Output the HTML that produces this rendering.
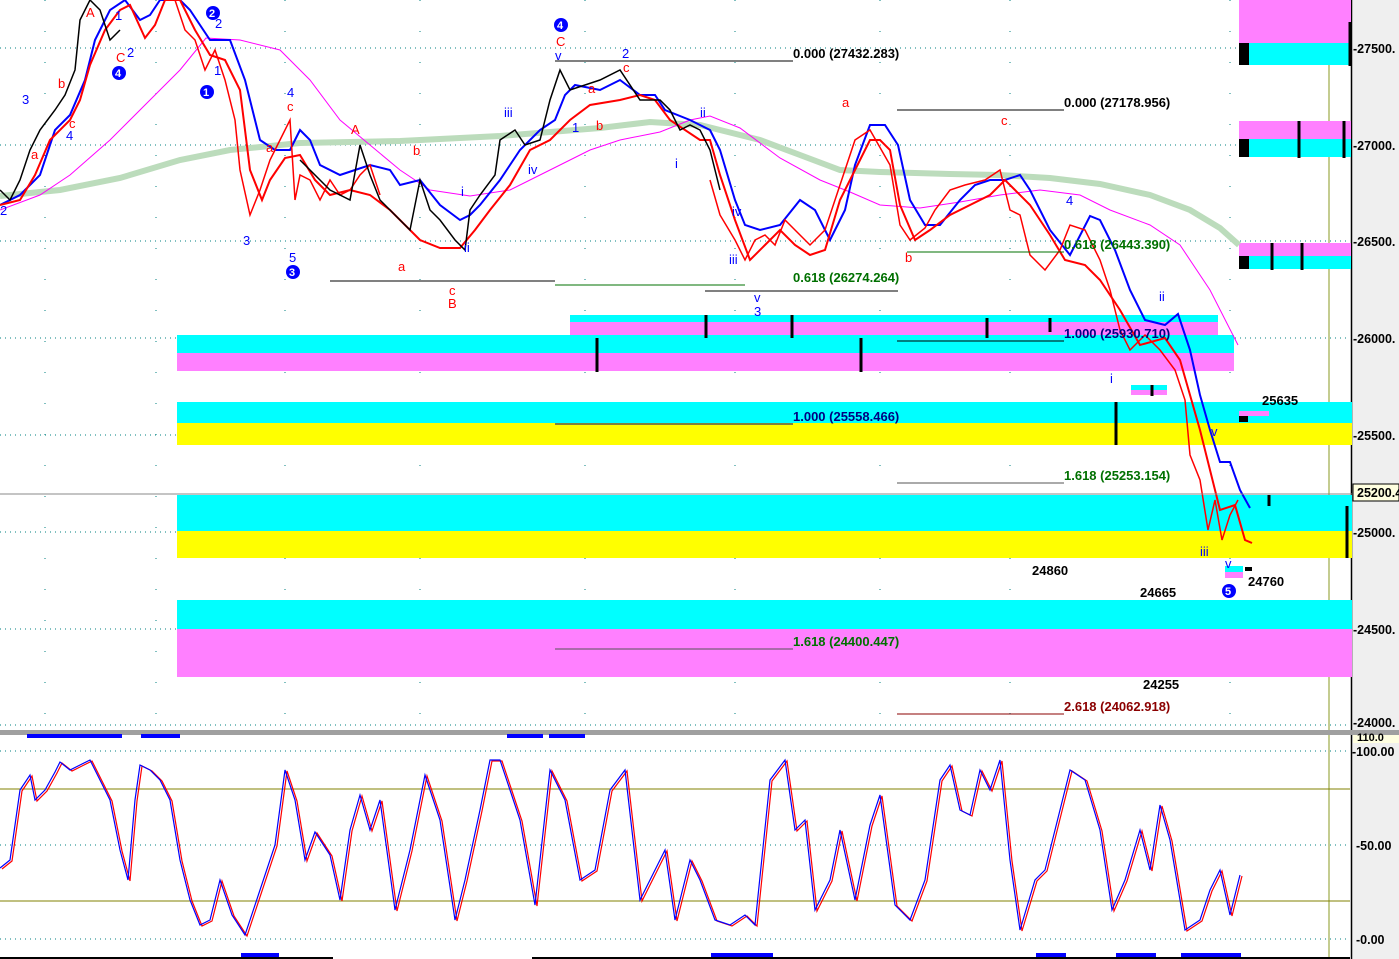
<!DOCTYPE html>
<html><head><meta charset="utf-8"><style>
html,body{margin:0;padding:0;background:#fff;}
svg{display:block;font-family:"Liberation Sans",sans-serif;font-weight:bold;}
</style></head><body>
<svg width="1399" height="959" viewBox="0 0 1399 959" xmlns="http://www.w3.org/2000/svg">
<rect width="1399" height="959" fill="#fff"/>
<rect x="1352" y="0" width="47" height="959" fill="#efefef"/>
<line x1="1351.5" y1="0" x2="1351.5" y2="959" stroke="#000" stroke-width="1.5"/>
<line x1="1329" y1="0" x2="1329" y2="959" stroke="#8a9a20" stroke-width="1"/>

<g stroke="#008080" stroke-width="1" stroke-dasharray="1,4">
<line x1="0" y1="48" x2="1350" y2="48"/><line x1="0" y1="145" x2="1350" y2="145"/>
<line x1="0" y1="241" x2="1350" y2="241"/><line x1="0" y1="338" x2="1350" y2="338"/>
<line x1="0" y1="435" x2="1350" y2="435"/><line x1="0" y1="532" x2="1350" y2="532"/>
<line x1="0" y1="629" x2="1350" y2="629"/><line x1="0" y1="725" x2="1350" y2="725"/>
<line x1="0" y1="751" x2="1350" y2="751"/><line x1="0" y1="845" x2="1350" y2="845"/><line x1="0" y1="939" x2="1350" y2="939"/>
</g>
<g stroke="#008080" stroke-width="1" stroke-dasharray="1,30">
<line x1="45" y1="0" x2="45" y2="730"/><line x1="156" y1="0" x2="156" y2="730"/><line x1="285" y1="0" x2="285" y2="730"/>
<line x1="420" y1="0" x2="420" y2="730"/><line x1="585" y1="0" x2="585" y2="730"/><line x1="735" y1="0" x2="735" y2="730"/>
<line x1="880" y1="0" x2="880" y2="730"/><line x1="1010" y1="0" x2="1010" y2="730"/><line x1="1230" y1="0" x2="1230" y2="730"/>
</g>

<rect x="570" y="315" width="648" height="7" fill="#00ffff"/>
<rect x="570" y="322" width="648" height="14" fill="#ff80ff"/>
<rect x="177" y="335" width="1057" height="18" fill="#00ffff"/>
<rect x="177" y="353" width="1057" height="18" fill="#ff80ff"/>
<rect x="1131" y="385" width="36" height="5" fill="#00ffff"/><rect x="1131" y="390" width="36" height="5" fill="#ff80ff"/>
<rect x="177" y="402" width="1175" height="21" fill="#00ffff"/>
<rect x="177" y="423" width="1175" height="22" fill="#ffff00"/>
<rect x="177" y="495" width="1175" height="36" fill="#00ffff"/>
<rect x="177" y="531" width="1175" height="27" fill="#ffff00"/>
<rect x="177" y="600" width="1175" height="29" fill="#00ffff"/>
<rect x="177" y="629" width="1175" height="48" fill="#ff80ff"/>
<rect x="1239" y="411" width="30" height="5" fill="#ff80ff"/><rect x="1239" y="416" width="9" height="6" fill="#000"/>
<rect x="1225" y="566" width="18" height="6" fill="#00ffff"/><rect x="1225" y="572" width="18" height="6" fill="#ff80ff"/>
<rect x="1245" y="567" width="7" height="4" fill="#000"/>
<rect x="1239" y="0" width="112" height="43" fill="#ff80ff"/><rect x="1239" y="43" width="112" height="22" fill="#00ffff"/><rect x="1239" y="43" width="10" height="22" fill="#000"/>
<rect x="1239" y="121" width="112" height="18" fill="#ff80ff"/><rect x="1239" y="139" width="112" height="18" fill="#00ffff"/><rect x="1239" y="139" width="10" height="18" fill="#000"/>
<rect x="1239" y="243" width="112" height="13" fill="#ff80ff"/><rect x="1239" y="256" width="112" height="13" fill="#00ffff"/><rect x="1239" y="256" width="10" height="13" fill="#000"/>
<g stroke="#000" stroke-width="3">
<line x1="1299" y1="121" x2="1299" y2="158"/><line x1="1344" y1="121" x2="1344" y2="158"/>
<line x1="1272" y1="243" x2="1272" y2="270"/><line x1="1302" y1="243" x2="1302" y2="270"/>
<line x1="1350" y1="22" x2="1350" y2="66"/>
<line x1="597" y1="338" x2="597" y2="372"/><line x1="706" y1="315" x2="706" y2="338"/><line x1="792" y1="315" x2="792" y2="338"/>
<line x1="861" y1="338" x2="861" y2="372"/><line x1="987" y1="318" x2="987" y2="338"/><line x1="1050" y1="318" x2="1050" y2="332"/>
<line x1="1116" y1="402" x2="1116" y2="445"/><line x1="1152" y1="385" x2="1152" y2="396"/>
<line x1="1269" y1="495" x2="1269" y2="506"/><line x1="1347" y1="506" x2="1347" y2="558"/>
</g>

<polyline fill="none" stroke="#bcdcbc" stroke-width="6" points="0,196 60,190 120,178 180,160 230,150 300,143 400,141 500,136 600,128 650,122 700,125 760,140 800,155 840,170 880,172 950,174 1000,175 1050,178 1100,184 1150,195 1190,210 1220,228 1239,245"/>
<polyline fill="none" stroke="#ff00ff" stroke-width="1" points="0,210 40,195 70,175 110,140 150,100 180,70 206,38 240,40 280,50 310,80 340,120 370,145 400,170 430,190 470,196 510,190 550,170 590,150 620,140 660,132 690,120 710,116 740,128 780,158 820,180 850,192 880,205 920,208 960,202 1000,195 1040,190 1080,195 1110,210 1150,225 1180,245 1210,290 1238,345"/>
<polyline fill="none" stroke="#0000ff" stroke-width="2" points="0,205 20,195 40,175 55,130 70,115 85,80 95,40 110,10 125,0 140,20 150,15 160,0 180,0 190,10 210,40 230,40 245,80 260,140 275,150 290,150 300,130 310,140 320,165 340,175 355,170 370,165 390,170 400,185 420,180 440,205 460,220 470,215 480,205 500,180 520,150 540,130 555,120 565,95 575,85 600,90 620,80 640,95 655,95 665,110 690,120 700,125 710,130 720,150 735,200 745,225 760,230 780,225 800,200 815,210 830,240 845,210 855,165 870,125 885,125 898,145 910,200 925,225 940,225 960,200 975,185 990,180 1005,180 1020,175 1030,190 1050,230 1070,255 1090,216 1100,220 1115,250 1130,290 1145,320 1165,325 1178,314 1190,350 1200,395 1210,430 1220,462 1230,462 1240,490 1250,508"/>
<polyline fill="none" stroke="#ff0000" stroke-width="2" points="0,205 20,200 35,175 50,140 70,120 80,100 90,65 105,30 120,10 130,5 145,38 155,25 165,0 180,0 195,30 210,55 225,60 240,90 250,170 262,200 270,180 285,158 300,155 315,180 330,195 350,190 370,195 390,210 405,225 420,240 440,248 460,248 475,230 490,210 510,185 530,150 550,140 570,120 590,105 620,100 640,95 655,100 670,120 700,140 710,140 720,175 735,220 750,260 765,245 780,230 795,245 810,255 825,250 840,200 855,170 870,140 880,140 890,150 900,205 915,240 930,230 950,215 970,205 990,195 1005,180 1015,190 1030,205 1050,235 1065,260 1085,265 1100,280 1120,310 1140,345 1165,338 1180,360 1190,395 1200,430 1210,470 1220,510 1235,505 1245,540 1252,543"/>
<polyline fill="none" stroke="#000" stroke-width="1.5" points="0,190 10,200 20,180 30,150 40,130 55,110 65,95 75,70 80,20 90,0 100,10 110,40 120,30"/>
<polyline fill="none" stroke="#ff0000" stroke-width="1.5" points="175,0 185,30 195,40 205,70 215,50 225,80 235,120 240,170 250,215 260,190 270,160 280,140 290,120 295,200 300,175 310,180 320,200 330,180 340,195 350,190 360,175 370,165 380,195"/>
<polyline fill="none" stroke="#000" stroke-width="1.5" points="300,160 330,190 350,200 360,145 370,175 380,200 395,215 410,230 420,180 430,210 440,220 455,240 465,250 470,210 480,195 495,175 500,140 515,130 525,145 540,140 550,100 560,70 570,90 600,80 620,70 640,100 660,100 670,110 680,130 690,125 700,130 710,150 720,190"/>
<polyline fill="none" stroke="#ff0000" stroke-width="1.5" points="710,180 720,215 735,240 745,260 755,240 765,235 775,245 785,220 795,230 810,245 825,230 835,200 845,170 855,140 870,130 890,165 900,225 910,240 925,228 935,210 950,190 965,185 985,180 1000,170 1010,210 1020,215 1030,255 1045,270 1060,250 1070,225 1085,230 1100,260 1110,290 1120,330 1130,350 1145,335 1160,350 1175,370 1185,400 1190,455 1200,480 1208,530 1215,500 1222,540 1230,515 1238,500"/>
<g stroke-width="1">
<line x1="555" y1="61" x2="793" y2="61" stroke="#000"/>
<line x1="897" y1="110" x2="1064" y2="110" stroke="#000"/>
<line x1="907" y1="252" x2="1064" y2="252" stroke="#007000"/>
<line x1="330" y1="281" x2="555" y2="281" stroke="#000"/>
<line x1="555" y1="285" x2="745" y2="285" stroke="#007000"/>
<line x1="705" y1="291" x2="898" y2="291" stroke="#000"/>
<line x1="897" y1="341" x2="1064" y2="341" stroke="#000"/>
<line x1="555" y1="424" x2="793" y2="424" stroke="#000080"/>
<line x1="897" y1="483" x2="1064" y2="483" stroke="#555"/>
<line x1="555" y1="649" x2="793" y2="649" stroke="#555"/>
<line x1="897" y1="714" x2="1064" y2="714" stroke="#8b0000"/>
<line x1="0" y1="494" x2="1352" y2="494" stroke="#888"/>
</g>
<g font-size="13">
<text x="793" y="58" fill="#000">0.000 (27432.283)</text>
<text x="1064" y="107" fill="#000">0.000 (27178.956)</text>
<text x="1064" y="249" fill="#007000">0.618 (26443.390)</text>
<text x="793" y="282" fill="#007000">0.618 (26274.264)</text>
<text x="1064" y="338" fill="#000080">1.000 (25930.710)</text>
<text x="793" y="421" fill="#000080">1.000 (25558.466)</text>
<text x="1064" y="480" fill="#007000">1.618 (25253.154)</text>
<text x="793" y="646" fill="#007000">1.618 (24400.447)</text>
<text x="1064" y="711" fill="#8b0000">2.618 (24062.918)</text>
<text x="1032" y="575" fill="#000">24860</text>
<text x="1140" y="597" fill="#000">24665</text>
<text x="1143" y="689" fill="#000">24255</text>
<text x="1262" y="405" fill="#000">25635</text>
<text x="1248" y="586" fill="#000">24760</text>
</g>
<g font-size="13" fill="#0000ff" font-weight="normal">
<text x="22" y="104">3</text><text x="0" y="215">2</text><text x="66" y="140">4</text><text x="127" y="57">2</text><text x="115" y="20">1</text>
<text x="243" y="245">3</text><text x="287" y="97">4</text><text x="289" y="262">5</text><text x="215" y="28">2</text><text x="214" y="75">1</text>
<text x="504" y="117">iii</text><text x="528" y="174">iv</text><text x="461" y="196">i</text><text x="464" y="252">ii</text>
<text x="555" y="60">v</text><text x="622" y="58">2</text><text x="572" y="132">1</text><text x="700" y="117">ii</text><text x="675" y="168">i</text>
<text x="729" y="264">iii</text><text x="732" y="216">iv</text><text x="754" y="302">v</text><text x="754" y="316">3</text>
<text x="1066" y="205">4</text><text x="1159" y="301">ii</text><text x="1110" y="383">i</text><text x="1200" y="556">iii</text><text x="1211" y="436">v</text><text x="1225" y="568">v</text>
</g>
<g font-size="13" fill="#ff0000" font-weight="normal">
<text x="86" y="17">A</text><text x="116" y="62">C</text><text x="58" y="88">b</text><text x="31" y="159">a</text><text x="69" y="128">c</text>
<text x="287" y="111">c</text><text x="266" y="152">a</text><text x="351" y="134">A</text><text x="413" y="155">b</text><text x="398" y="271">a</text>
<text x="449" y="295">c</text><text x="448" y="308">B</text><text x="556" y="46">C</text><text x="588" y="93">a</text><text x="623" y="72">c</text>
<text x="596" y="130">b</text><text x="842" y="107">a</text><text x="1001" y="125">c</text><text x="905" y="262">b</text>
</g>
<g font-size="11" font-weight="bold">
<circle cx="119" cy="73" r="7" fill="#0000ff"/><text x="115" y="77" fill="#fff">4</text>
<circle cx="207" cy="92" r="7" fill="#0000ff"/><text x="203" y="96" fill="#fff">1</text>
<circle cx="213" cy="13" r="7" fill="#0000ff"/><text x="209" y="17" fill="#fff">2</text>
<circle cx="293" cy="272" r="7" fill="#0000ff"/><text x="289" y="276" fill="#fff">3</text>
<circle cx="561" cy="25" r="7" fill="#0000ff"/><text x="557" y="29" fill="#fff">4</text>
<circle cx="1229" cy="591" r="7" fill="#0000ff"/><text x="1225" y="595" fill="#fff">5</text>
</g>

<g font-size="12.5" fill="#000">
<text x="1353" y="53">-27500.</text><text x="1353" y="150">-27000.</text><text x="1353" y="246">-26500.</text>
<text x="1353" y="343">-26000.</text><text x="1353" y="440">-25500.</text><text x="1353" y="537">-25000.</text>
<text x="1353" y="634">-24500.</text><text x="1353" y="727">-24000.</text>
<rect x="1353" y="484" width="46" height="17" fill="#ffffe0" stroke="#000"/>
<text x="1357" y="497">25200.4</text>
</g>

<rect x="0" y="730" width="1399" height="5" fill="#a0a0a0"/>
<rect x="1353" y="735" width="46" height="8" fill="#ffffe0"/>

<line x1="0" y1="789" x2="1350" y2="789" stroke="#808000"/>
<line x1="0" y1="901" x2="1350" y2="901" stroke="#808000"/>
<g fill="#0000ff">
<rect x="27" y="734" width="95" height="4"/><rect x="141" y="734" width="39" height="4"/><rect x="507" y="734" width="36" height="4"/><rect x="549" y="734" width="36" height="4"/>
<rect x="241" y="953" width="38" height="4"/><rect x="711" y="953" width="62" height="4"/><rect x="1036" y="953" width="30" height="4"/><rect x="1116" y="953" width="40" height="4"/><rect x="1181" y="953" width="60" height="4"/>
</g>
<line x1="0" y1="958" x2="333" y2="958" stroke="#000" stroke-width="2"/>
<line x1="532" y1="958" x2="1350" y2="958" stroke="#000" stroke-width="2"/>
<polyline fill="none" stroke="#ff0000" stroke-width="1.2" transform="translate(2,1)" points="0,868 10,860 20,790 30,775 35,800 45,790 55,772 60,762 70,770 80,765 90,760 100,780 110,800 120,850 128,880 135,800 140,765 150,770 160,780 170,800 180,860 190,900 200,925 210,920 220,880 232,915 245,935 260,890 275,845 285,770 295,800 305,860 315,832 330,855 340,900 350,830 360,795 370,830 380,800 395,910 410,850 425,775 440,820 455,920 465,880 480,810 490,760 500,760 510,790 520,820 535,905 550,770 565,800 580,880 595,870 610,790 625,770 640,900 655,870 665,850 675,920 690,860 700,880 715,920 730,925 745,915 755,925 770,780 785,760 795,830 805,820 815,910 830,880 840,830 855,900 870,825 880,795 895,905 910,920 925,880 940,780 950,765 960,810 970,815 980,770 990,790 1000,760 1010,860 1020,930 1035,880 1045,870 1060,810 1070,770 1085,780 1100,830 1112,910 1125,880 1140,830 1150,870 1160,805 1170,840 1185,930 1200,920 1210,890 1220,870 1230,915 1240,875"/>
<polyline fill="none" stroke="#0000ff" stroke-width="1.2" points="0,868 10,860 20,790 30,775 35,800 45,790 55,772 60,762 70,770 80,765 90,760 100,780 110,800 120,850 128,880 135,800 140,765 150,770 160,780 170,800 180,860 190,900 200,925 210,920 220,880 232,915 245,935 260,890 275,845 285,770 295,800 305,860 315,832 330,855 340,900 350,830 360,795 370,830 380,800 395,910 410,850 425,775 440,820 455,920 465,880 480,810 490,760 500,760 510,790 520,820 535,905 550,770 565,800 580,880 595,870 610,790 625,770 640,900 655,870 665,850 675,920 690,860 700,880 715,920 730,925 745,915 755,925 770,780 785,760 795,830 805,820 815,910 830,880 840,830 855,900 870,825 880,795 895,905 910,920 925,880 940,780 950,765 960,810 970,815 980,770 990,790 1000,760 1010,860 1020,930 1035,880 1045,870 1060,810 1070,770 1085,780 1100,830 1112,910 1125,880 1140,830 1150,870 1160,805 1170,840 1185,930 1200,920 1210,890 1220,870 1230,915 1240,875"/>
<g font-size="12.5" fill="#000">
<text x="1357" y="741" font-size="11">110.0</text>
<text x="1352" y="756">-100.00</text><text x="1356" y="850">-50.00</text><text x="1356" y="944">-0.00</text>
</g>
</svg>
</body></html>
